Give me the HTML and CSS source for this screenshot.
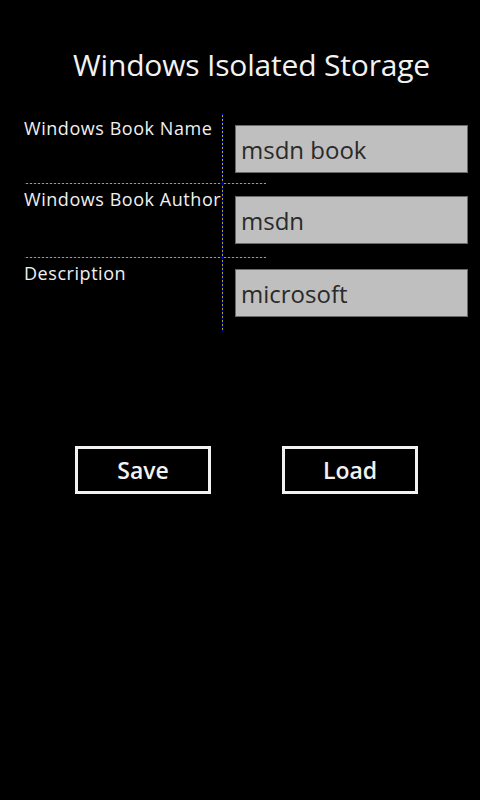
FILE: index.html
```html
<!DOCTYPE html>
<html>
<head>
<meta charset="utf-8">
<link rel="stylesheet" href="styles.css">
</head>
<body>
<div class="page">
  <h1 class="title">Windows Isolated Storage</h1>
  <div class="form">
    <div class="cell label r1">Windows Book Name</div>
    <div class="cell field r1"><div class="textbox">msdn book</div></div>
    <div class="cell label r2">Windows Book Author</div>
    <div class="cell field r2"><div class="textbox">msdn</div></div>
    <div class="cell label r3 last">Description</div>
    <div class="cell field r3 last"><div class="textbox">microsoft</div></div>
  </div>
  <div class="buttons">
    <div class="btn">Save</div>
    <div class="btn">Load</div>
  </div>
</div>
</body>
</html>
```
FILE: styles.css
```css
html, body {
  margin: 0;
  padding: 0;
  background: #000;
}
body {
  width: 480px;
  height: 800px;
  font-family: "Open Sans", "Noto Sans", sans-serif;
  color: #fff;
}
.page {
  display: flex;
  flex-direction: column;
}
.title {
  margin: 0;
  padding: 45px 0 0 73px;
  height: 113px;
  box-sizing: border-box;
  font-size: 30px;
  font-weight: 400;
  line-height: 40px;
  letter-spacing: -0.18px;
  color: #f2f2f2;
}
.form {
  margin: 0 0 0 24px;
  width: 242px;
  display: grid;
  grid-template-columns: 198px 44px;
  grid-template-rows: 71px 74px 73px;
}
.cell {
  position: relative;
}
.cell:not(.last)::after {
  content: "";
  position: absolute;
  left: 0;
  right: 0;
  bottom: 0;
  height: 1px;
  background: repeating-linear-gradient(90deg, #0000c0 0 2px, #b0b000 2px 4px);
}
.field::before {
  content: "";
  position: absolute;
  left: 0;
  top: 0;
  bottom: 0;
  width: 1px;
  background: repeating-linear-gradient(180deg, #0000c0 0 2px, #b0b000 2px 4px);
}
.label {
  font-size: 18px;
  line-height: 22px;
  padding-top: 4px;
  color: #f0f0f0;
  white-space: nowrap;
  letter-spacing: 0.55px;
}
.field {
  z-index: 1;
}
.r1 .textbox { margin-top: 12px; }
.r2 .textbox { margin-top: 12px; }
.r3 .textbox { margin-top: 11px; }
.textbox {
  position: relative;
  margin-left: 13px;
  width: 233px;
  height: 48px;
  box-sizing: border-box;
  background: #bfbfbf;
  border: 1px solid #6a6a6a;
  color: #2a2a2a;
  font-size: 24px;
  line-height: 47px;
  padding-left: 5px;
}
.buttons {
  margin-top: 115px;
  padding-left: 75px;
  display: flex;
  gap: 71px;
}
.btn {
  width: 136px;
  height: 48px;
  box-sizing: border-box;
  border: 3px solid #f2f2f2;
  display: flex;
  align-items: center;
  justify-content: center;
  font-size: 23px;
  font-weight: 600;
  color: #f2f2f2;
}
```
